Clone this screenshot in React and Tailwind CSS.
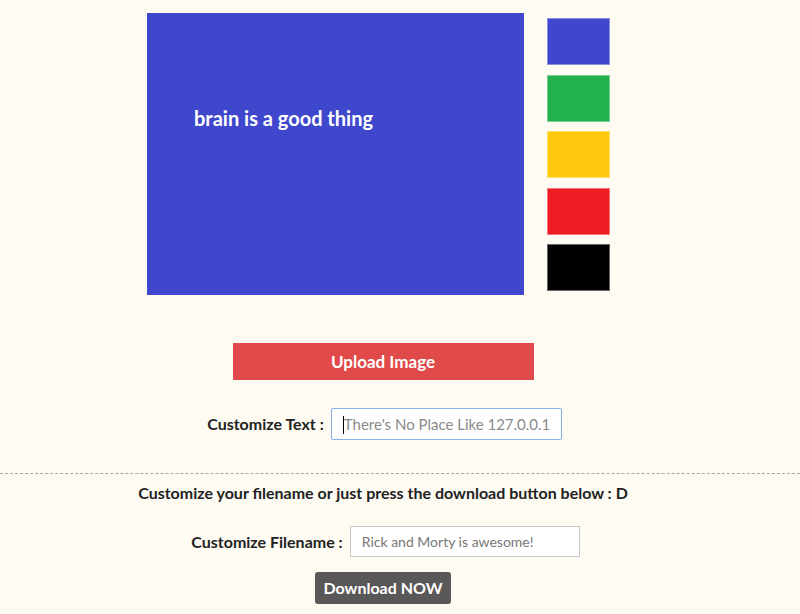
import React, { useState } from "react";

const swatches = ["#3f48cc", "#22b14c", "#ffc90e", "#ed1c24", "#000000"];

export default function App() {
  const [color, setColor] = useState("#3f48cc");
  const [text, setText] = useState("");
  const [filename, setFilename] = useState("");

  return (
    <div
      className="min-h-[614px] w-full bg-[#fefbf3] text-[#222]"
      style={{ fontFamily: "Lato, 'Open Sans', sans-serif" }}
    >
      <div className="flex pl-[147px] pt-[13px]">
        <div
          className="h-[282px] w-[377px] pl-[47px] pt-[92px]"
          style={{ backgroundColor: color }}
        >
          <p className="text-[20px] font-bold leading-[26px] text-white">
            {text || "brain is a good thing"}
          </p>
        </div>
        <div className="ml-[23px] mt-[5px] flex flex-col gap-[9.5px]">
          {swatches.map((c) => (
            <button
              key={c}
              onClick={() => setColor(c)}
              className="h-[47px] w-[63px] border border-white/40"
              style={{ backgroundColor: c }}
            />
          ))}
        </div>
      </div>

      <div className="flex w-[766px] flex-col items-center">
        <button className="mt-[48px] h-[37px] w-[301px] bg-[#e04a4a] text-[17px] font-bold text-white">
          Upload Image
        </button>

        <div className="mt-[28px] flex items-center gap-[7px] pl-[3px]">
          <label className="text-[16px] font-bold text-[#222]">Customize Text :</label>
          <div className="relative">
            <input
              value={text}
              onChange={(e) => setText(e.target.value)}
              placeholder="There's No Place Like 127.0.0.1"
              className="h-[32px] w-[231px] rounded-[2px] border border-[#89afe3] bg-white pl-[12px] text-[15px] text-[#333] outline-none placeholder:text-[#8a8a8a]"
            />
            <span className="absolute left-[12px] top-[8px] h-[18px] w-px bg-black" />
          </div>
        </div>
      </div>

      <div className="mt-[33px] border-t border-dashed border-[#a8a8a8]" />

      <div className="flex w-[766px] flex-col items-center">
        <p className="mt-[7px] text-[16px] font-bold text-[#222]">
          Customize your filename or just press the download button below : D
        </p>

        <div className="mt-[21px] flex items-center gap-[7px] pl-[5px]">
          <label className="text-[16px] font-bold text-[#222]">Customize Filename :</label>
          <input
            value={filename}
            onChange={(e) => setFilename(e.target.value)}
            placeholder="Rick and Morty is awesome!"
            className="h-[31px] w-[230px] border border-[#c8c8c8] bg-white pl-[11px] text-[14px] text-[#333] outline-none placeholder:text-[#777]"
          />
        </div>

        <button className="mt-[15px] h-[32px] w-[136px] rounded-[3px] bg-[#5a5759] text-[16px] font-bold text-white">
          Download NOW
        </button>
      </div>
    </div>
  );
}
